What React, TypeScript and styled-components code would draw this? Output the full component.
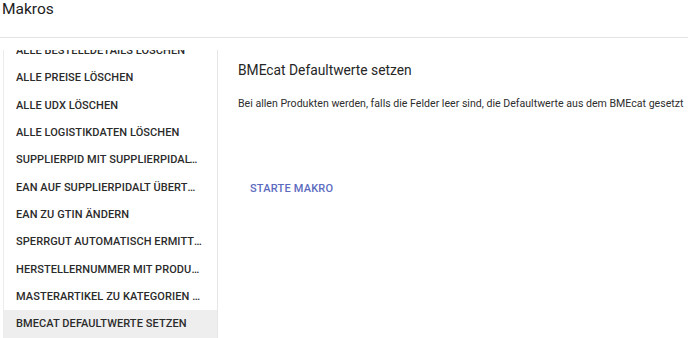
import React, { useLayoutEffect, useRef } from "react";
import styled, { createGlobalStyle } from "styled-components";

const GlobalStyle = createGlobalStyle`
  html, body { margin: 0; padding: 0; background: #ffffff; }
  body { font-family: Roboto, "Liberation Sans", Arial, sans-serif; color: rgba(0,0,0,0.87); }
  * { box-sizing: border-box; }
`;

const Page = styled.div`
  width: 688px;
  height: 338px;
  overflow: hidden;
  display: flex;
  flex-direction: column;
`;

const Header = styled.header`
  height: 38px;
  flex: none;
  border-bottom: 1px solid #e4e4e4;
  padding: 0 0 0 2px;
  font-size: 15.5px;
  line-height: 18px;
  color: #212121;
  display: flex;
  align-items: flex-start;
`;

const Body = styled.div`
  flex: 1;
  min-height: 0;
  display: flex;
  padding-top: 12px;
  padding-left: 3px;
`;

const Sidebar = styled.nav`
  width: 215px;
  flex: none;
  height: 100%;
  border-left: 1px solid #ececec;
  border-right: 1px solid #e6e6e6;
  overflow-y: auto;
  scrollbar-width: none;
  &::-webkit-scrollbar { display: none; }
`;

const Item = styled.div<{ $active?: boolean }>`
  height: 27.33px;
  display: flex;
  align-items: center;
  padding: 0 15px 0 12px;
  background: ${(p) => (p.$active ? "#eeeeee" : "transparent")};
  font-size: 11px;
  font-weight: 500;
  letter-spacing: 0.08px;
  text-transform: uppercase;
  color: #2b2b2b;
  white-space: nowrap;
  overflow: hidden;
  span {
    overflow: hidden;
    text-overflow: ellipsis;
    display: block;
  }
`;

const Content = styled.main`
  flex: 1;
  min-width: 0;
  padding: 10px 0 0 20px;
`;

const Title = styled.h2`
  margin: 0;
  font-size: 13.8px;
  font-weight: 400;
  line-height: 20px;
  color: #262626;
`;

const Description = styled.p`
  margin: 15px 0 0;
  font-size: 10.6px;
  line-height: 18px;
  color: #2e2e2e;
  white-space: nowrap;
`;

const Button = styled.button`
  margin-top: 57px;
  height: 36px;
  padding: 0 12px;
  border: none;
  background: transparent;
  font-family: inherit;
  font-size: 11px;
  font-weight: 500;
  letter-spacing: 0.2px;
  text-transform: uppercase;
  color: #5c6bc0;
  cursor: pointer;
`;

const items = [
  "Alle Bestelldetails löschen",
  "Alle Preise löschen",
  "Alle UDX löschen",
  "Alle Logistikdaten löschen",
  "SupplierPID mit SupplierPIDAlt überschreiben",
  "EAN auf SupplierPIDAlt übertragen",
  "EAN zu GTIN ändern",
  "Sperrgut automatisch ermitteln",
  "Herstellernummer mit Produktnummer füllen",
  "Masterartikel zu Kategorien zuordnen",
  "BMEcat Defaultwerte setzen",
];

export default function App() {
  const listRef = useRef<HTMLElement>(null);
  useLayoutEffect(() => {
    if (listRef.current) listRef.current.scrollTop = 16;
  }, []);
  return (
    <>
      <GlobalStyle />
      <Page>
        <Header>Makros</Header>
        <Body>
          <Sidebar ref={listRef}>
            {items.map((label, i) => (
              <Item key={label} $active={i === items.length - 1}>
                <span>{label}</span>
              </Item>
            ))}
          </Sidebar>
          <Content>
            <Title>BMEcat Defaultwerte setzen</Title>
            <Description>
              Bei allen Produkten werden, falls die Felder leer sind, die Defaultwerte aus dem BMEcat gesetzt
            </Description>
            <Button type="button">Starte Makro</Button>
          </Content>
        </Body>
      </Page>
    </>
  );
}
